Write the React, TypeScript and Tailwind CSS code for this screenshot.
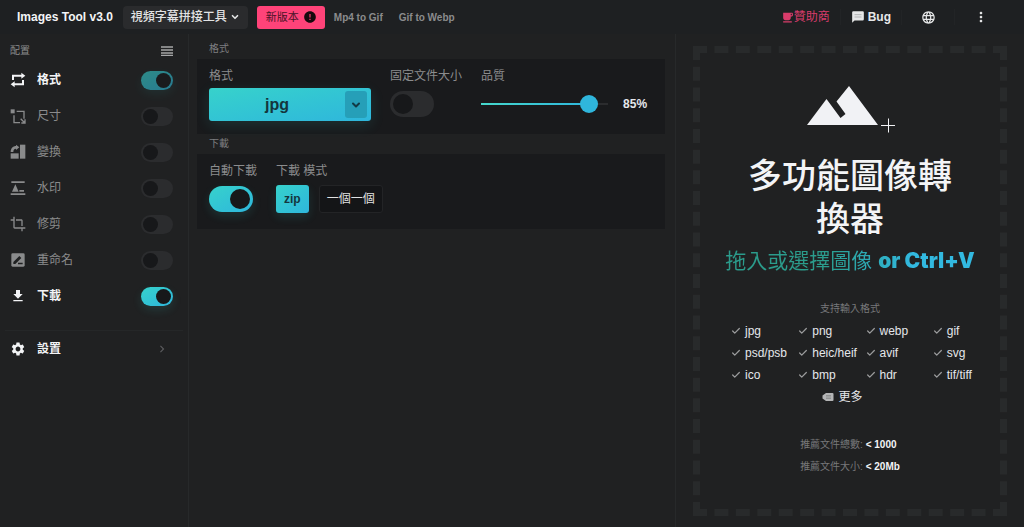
import { useState } from "react"
import type { ReactNode } from "react"
import { Check, ChevronDown } from "lucide-react"
import {
  MdChevronRight,
  MdCrop,
  MdError,
  MdFileDownload,
  MdFreeBreakfast,
  MdLanguage,
  MdMoreVert,
  MdSettings,
} from "react-icons/md"

type Step = { id: string; label: string; icon: ReactNode; locked?: boolean }

function ConvertIcon() {
  return (
    <svg viewBox="0 0 24 24" className="size-4" fill="currentColor">
      <path d="M3 4h14V1l6 4.500-6 4.500V7H6v5H3zM21 20H7v3l-6-4.500L7 14v3h11v-5h3z" />
    </svg>
  )
}

function ResizeIcon() {
  return (
    <svg viewBox="0 0 24 24" className="size-4" fill="none" stroke="currentColor" strokeWidth="2">
      <rect x="1" y="2" width="6" height="6" fill="currentColor" stroke="none" />
      <path d="M10 5h11v11M6 11v11h9" />
      <path d="M16 16l6 6M22.500 17v5.500H17" />
    </svg>
  )
}

function TransformIcon() {
  return (
    <svg viewBox="0 0 24 24" className="size-4" fill="currentColor">
      <path d="M15 1h8v21h-8z" />
      <path d="M1 14h12v8H1z" />
      <path d="M1 12C1 6 5 3 9 3V1l5 4-5 4V7c-3 0-4 2-4 5z" />
    </svg>
  )
}

function WatermarkIcon() {
  return (
    <svg viewBox="0 0 24 24" className="size-4" fill="currentColor">
      <path d="M2 2h20v2.500H2zM1 20h22v2.500H1zM3 17.500l5-11 5 11zM14 15h7v2.500h-7z" />
    </svg>
  )
}

function RenameIcon() {
  return (
    <svg viewBox="0 0 24 24" className="size-4">
      <rect x="2" y="2" width="20" height="20" rx="2" fill="currentColor" />
      <path d="M5 18v-3l9-9 3 3-9 9zM12 16h7v2.500h-7z" fill="#202122" />
    </svg>
  )
}

function ListIcon() {
  return (
    <svg viewBox="0 0 12 10" className="h-[10px] w-3">
      <path d="M0 1h12M0 4h12M0 7h12M0 9.500h12" stroke="currentColor" strokeWidth="1.5" />
    </svg>
  )
}

function ChatIcon() {
  return (
    <svg viewBox="0 0 24 24" className="size-[14px]">
      <path d="M4 2h16a2 2 0 012 2v12a2 2 0 01-2 2H6l-4 4V4a2 2 0 012-2z" fill="currentColor" />
      <path d="M6 8h12M6 12h12" stroke="#a9abad" strokeWidth="1.5" />
    </svg>
  )
}

function MountainIcon() {
  return (
    <svg viewBox="0 0 90 48" className="h-12 w-[90px]" fill="none">
      <path d="M2 40L21.500 14l14 19 5-4-9-12.500L44 1l29 39z" fill="none" />
      <path d="M2 40L21.500 14l14 19 5-4-9-12.500L44 1l29 39z" fill="#f1f2f5" />
      <path d="M76 40.500h15M83.500 33.500v14" stroke="#f1f2f5" />
    </svg>
  )
}

function TagIcon() {
  return (
    <svg viewBox="0 0 12 10" className="h-[10px] w-3">
      <path d="M4 1h6.500a1 1 0 011 1v6a1 1 0 01-1 1H4L.5 6.500v-3z" fill="#b4b5b6" />
      <path d="M4 3.500h5M4 5h5M4 6.500h5" stroke="#77797a" strokeWidth=".6" />
    </svg>
  )
}

const steps: Step[] = [
  { id: "format", label: "格式", icon: <ConvertIcon />, locked: true },
  { id: "size", label: "尺寸", icon: <ResizeIcon /> },
  { id: "transform", label: "變換", icon: <TransformIcon /> },
  { id: "watermark", label: "水印", icon: <WatermarkIcon /> },
  { id: "crop", label: "修剪", icon: <MdCrop /> },
  { id: "rename", label: "重命名", icon: <RenameIcon /> },
  { id: "download", label: "下載", icon: <MdFileDownload /> },
]

const formats = [
  "jpg", "png", "webp", "gif",
  "psd/psb", "heic/heif", "avif", "svg",
  "ico", "bmp", "hdr", "tif/tiff",
]

const smallToggle =
  "relative h-[19px] w-8 shrink-0 appearance-none rounded-full bg-[#2b2c2e] before:absolute before:top-[2px] before:left-[2px] before:size-[15px] before:rounded-full before:bg-[#17181a] checked:bg-linear-to-br checked:from-[#37d2cb] checked:to-[#2fb6dc] checked:shadow-[0_4px_10px_#36cfcc22] checked:before:left-[15px] disabled:opacity-60"

const largeToggle =
  "relative block h-[26px] w-11 appearance-none rounded-full bg-[#2b2c2e] before:absolute before:top-[3px] before:left-[3px] before:size-5 before:rounded-full before:bg-[#17181a] checked:bg-linear-to-br checked:from-[#37d2cb] checked:to-[#2fb6dc] checked:shadow-[0_4px_10px_#36cfcc22] checked:before:left-[21px]"

function Header() {
  return (
    <header className="flex h-[34px] shrink-0 items-center bg-[#1e2022] pl-[17px]">
      <h1 className="text-xs font-bold whitespace-nowrap text-gray-100">Images Tool v3.0</h1>
      <button className="ml-[10px] flex h-[23px] items-center gap-[3px] rounded bg-[#2a2b2d] px-2 text-xs font-medium whitespace-nowrap text-[#e2e3e4]">
        視頻字幕拼接工具
        <ChevronDown className="size-[10px]" strokeWidth={4} />
      </button>
      <button className="ml-[9px] flex h-[23px] items-center gap-1 rounded-[3px] bg-[#ff4379] pr-2 pl-[9px] text-[11px] whitespace-nowrap text-[#4b1428]">
        新版本
        <MdError className="size-[14px] text-[#16090d]" />
      </button>
      <nav className="ml-[9px] flex gap-4 text-[10px] font-bold whitespace-nowrap text-[#8b8c8d]">
        <a href="#mp4-to-gif">Mp4 to Gif</a>
        <a href="#gif-to-webp">Gif to Webp</a>
      </nav>
      <div className="ml-auto flex items-center text-xs text-[#e6e7e8]">
        <a href="#sponsor" className="flex items-center px-[10px] whitespace-nowrap text-[#d93c6b]">
          <MdFreeBreakfast className="size-[13px]" />
          贊助商
        </a>
        <a href="#bug" className="flex items-center gap-[3px] border-l border-[#222426] px-[10px] font-bold">
          <ChatIcon />
          Bug
        </a>
        <button aria-label="Language" className="flex w-[53px] justify-center border-l border-[#222426]">
          <MdLanguage className="size-[15px]" />
        </button>
        <button aria-label="Menu" className="mr-[17px] flex w-[53px] justify-center border-l border-[#222426]">
          <MdMoreVert className="size-4" />
        </button>
      </div>
    </header>
  )
}

function Sidebar({ enabled, onToggle }: { enabled: string[]; onToggle: (id: string) => void }) {
  return (
    <aside className="w-[189px] shrink-0 border-r border-[#27292a] px-[5px] pt-[5px]">
      <div className="flex h-[23px] items-center justify-between pr-[10px] pl-[5px] text-[10px] text-[#8b8c8d]">
        <h2>配置</h2>
        <button aria-label="List" className="text-[#a5a6a7]">
          <ListIcon />
        </button>
      </div>
      <ul>
        {steps.map((s) => {
          const on = enabled.includes(s.id)
          return (
            <li key={s.id}>
              <label
                className={`flex h-9 items-center pr-[10px] pl-[5px] text-xs ${
                  on ? "font-bold text-gray-100" : "text-[#8a8b8c]"
                }`}
              >
                <span className="mr-[11px] text-base">{s.icon}</span>
                <span className="flex-1">{s.label}</span>
                <input
                  type="checkbox"
                  className={smallToggle}
                  checked={on}
                  disabled={s.locked}
                  onChange={() => onToggle(s.id)}
                />
              </label>
            </li>
          )
        })}
      </ul>
      <button className="mt-4 flex h-[37px] w-full items-center border-t border-[#252728] pr-[14px] pl-[5px] text-xs font-bold text-gray-100">
        <MdSettings className="mr-[11px] size-4" />
        <span className="flex-1 text-left">設置</span>
        <MdChevronRight className="size-[14px] text-[#5b5c5e]" />
      </button>
    </aside>
  )
}

function Section({ title, children }: { title: string; children: ReactNode }) {
  return (
    <section>
      <h2 className="flex h-5 items-center px-3 text-[10px] text-[#7d7e80]">{title}</h2>
      <div className="flex h-[75px] items-start gap-[19px] bg-[#191a1c] px-3 pt-2">{children}</div>
    </section>
  )
}

function Settings() {
  const [format, setFormat] = useState("jpg")
  const [fixed, setFixed] = useState(false)
  const [quality, setQuality] = useState(85)
  const [auto, setAuto] = useState(true)
  const [mode, setMode] = useState<"zip" | "single">("zip")

  return (
    <main className="min-w-0 flex-1 pt-[5px] pr-[10px] pl-2 text-xs whitespace-nowrap text-[#8b8c8d]">
      <Section title="格式">
        <div>
          <label htmlFor="format" className="block h-[21px] leading-[18px]">格式</label>
          <div className="relative">
            <select
              id="format"
              value={format}
              onChange={(e) => setFormat(e.target.value)}
              className="block h-[33px] w-[162px] appearance-none rounded-[3px] bg-linear-to-br from-[#37d2cb] to-[#2fb6dc] pr-[26px] text-center text-base font-bold text-[#14363d] shadow-[0_4px_14px_#36cfcc22]"
            >
              <option>jpg</option>
              <option>png</option>
              <option>webp</option>
            </select>
            <span className="pointer-events-none absolute top-[3px] right-1 flex h-[27px] w-[22px] items-center justify-center rounded-[3px] bg-[#269fb8] text-[#123a45]">
              <ChevronDown className="size-3" strokeWidth={4} />
            </span>
          </div>
        </div>
        <div>
          <label htmlFor="fixed" className="block h-6 leading-[18px]">固定文件大小</label>
          <input
            id="fixed"
            type="checkbox"
            className={largeToggle}
            checked={fixed}
            onChange={() => setFixed(!fixed)}
          />
        </div>
        <div>
          <label htmlFor="quality" className="block h-6 leading-[18px]">品質</label>
          <div className="flex h-[26px] items-center gap-[15px]">
            <div className="relative flex w-[127px] items-center">
              <div className="absolute h-[2px] w-full bg-[#2b2c2e]">
                <div
                  className="h-full bg-linear-to-r from-[#46d8cc] to-[#2fb6dc]"
                  style={{ width: `${quality}%` }}
                />
              </div>
              <input
                id="quality"
                type="range"
                value={quality}
                onChange={(e) => setQuality(Number(e.target.value))}
                className="relative -mx-[9px] h-[18px] w-[145px] shrink-0 appearance-none bg-transparent [&::-webkit-slider-thumb]:size-[18px] [&::-webkit-slider-thumb]:appearance-none [&::-webkit-slider-thumb]:rounded-full [&::-webkit-slider-thumb]:bg-[#2fb6dc]"
              />
            </div>
            <span className="font-bold text-gray-200">{quality}%</span>
          </div>
        </div>
      </Section>
      <Section title="下載">
        <div>
          <label htmlFor="auto" className="block h-6 leading-[18px]">自動下載</label>
          <input
            id="auto"
            type="checkbox"
            className={largeToggle}
            checked={auto}
            onChange={() => setAuto(!auto)}
          />
        </div>
        <div>
          <div className="h-[23px] leading-[18px]">下載 模式</div>
          <div className="flex gap-[10px]">
            {(["zip", "single"] as const).map((m) => (
              <button
                key={m}
                onClick={() => setMode(m)}
                className={`h-7 rounded-[3px] border px-[7px] ${
                  mode === m
                    ? "border-transparent bg-linear-to-br from-[#37d2cb] to-[#2fb6dc] bg-origin-border font-bold text-[#14363d] shadow-[0_4px_10px_#36cfcc22]"
                    : "border-[#232426] bg-[#141517] text-[#e0e1e2]"
                }`}
              >
                {m === "zip" ? "zip" : "一個一個"}
              </button>
            ))}
          </div>
        </div>
      </Section>
    </main>
  )
}

function DropZone() {
  return (
    <section className="flex w-[349px] shrink-0 border-l border-[#27292a] pt-3 pr-[17px] pb-[11px] pl-[17px]">
      <div className="flex flex-1 flex-col items-center border-[7px] border-dashed border-[#282a2b] pt-8 text-center">
        <MountainIcon />
        <h2 className="mt-[22px] w-[230px] text-[34px] leading-[43px] font-medium text-gray-100">多功能圖像轉換器</h2>
        <button className="mt-[6px] bg-linear-to-r from-[#2b9c8c] from-40% to-[#32b9e0] to-75% bg-clip-text text-[21px] leading-7 whitespace-nowrap text-transparent">
          拖入或選擇圖像 <span className="font-[Inter,sans-serif] font-black">or Ctrl+V</span>
        </button>
        <p className="mt-6 text-[10px] leading-5 text-[#77787a]">支持輸入格式</p>
        <ul className="mt-px grid w-full grid-cols-4 pl-[31px] text-xs leading-[22px] text-gray-200">
          {formats.map((f) => (
            <li key={f} className="flex items-center gap-1 whitespace-nowrap">
              <Check className="size-[10px] shrink-0 text-[#9b9c9d]" strokeWidth={3} />
              {f}
            </li>
          ))}
        </ul>
        <button className="mr-[15px] flex h-[22px] items-center gap-1 text-xs text-gray-200">
          <TagIcon />
          更多
        </button>
        <div className="mt-[26px] text-left text-[10px] leading-[22px] text-[#77787a]">
          <p>
            推薦文件總數: <b className="text-gray-100">&lt; 1000</b>
          </p>
          <p>
            推薦文件大小: <b className="text-gray-100">&lt; 20Mb</b>
          </p>
        </div>
      </div>
    </section>
  )
}

export default function App() {
  const [enabled, setEnabled] = useState(["format", "download"])

  function toggle(id: string) {
    setEnabled((prev) => (prev.includes(id) ? prev.filter((x) => x !== id) : [...prev, id]))
  }

  return (
    <div className="flex min-h-screen flex-col bg-[#202122] font-[Liberation_Sans,Noto_Sans_CJK_TC,sans-serif]">
      <Header />
      <div className="flex flex-1">
        <Sidebar enabled={enabled} onToggle={toggle} />
        <Settings />
        <DropZone />
      </div>
    </div>
  )
}
